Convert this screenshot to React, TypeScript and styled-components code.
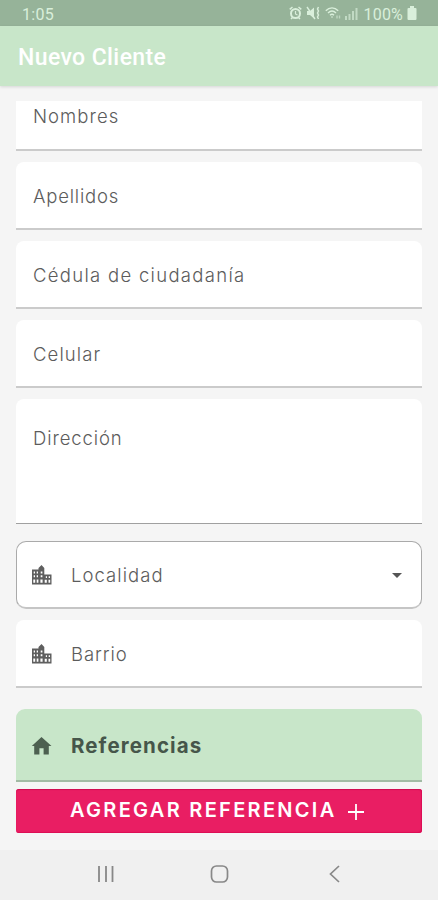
import React from "react";
import styled, { createGlobalStyle } from "styled-components";

const GlobalStyle = createGlobalStyle`
  * { box-sizing: border-box; }
  body { margin: 0; background: #f5f5f5; }
`;

const Screen = styled.div`
  width: 438px;
  height: 900px;
  display: flex;
  flex-direction: column;
  overflow: hidden;
  background: #f5f5f5;
  font-family: Inter, "Open Sans", sans-serif;
  color: #5c5c5c;
`;

const StatusBar = styled.header`
  height: 26px;
  flex: none;
  padding: 2px 21px 0 22px;
  display: flex;
  align-items: center;
  justify-content: space-between;
  background: #96b399;
  color: #d9efdb;
  font: 400 16px Roboto, sans-serif;
`;

const Clock = styled.span`
  letter-spacing: 0.3px;
`;

const StatusIcons = styled.div`
  display: flex;
  align-items: center;
  gap: 4px;
  svg { display: block; position: relative; top: -1px; }
`;

const Percent = styled.span`
  letter-spacing: 0.2px;
  margin-left: 2px;
`;

const AppBar = styled.div`
  height: 60px;
  flex: none;
  padding: 2px 18px 0;
  display: flex;
  align-items: center;
  background: #c8e6c9;
  box-shadow: 0 1px 3px rgba(0, 0, 0, 0.13);
  color: #fff;
  font: 500 23px Roboto, sans-serif;
  letter-spacing: 0.4px;
`;

const Form = styled.main`
  flex: 1;
  padding: 15px 16px 0;
  display: flex;
  flex-direction: column;
`;

const Field = styled.label<{ $height?: number; $clipped?: boolean; $gap?: number; $multiline?: boolean }>`
  height: ${(p) => p.$height ?? 68}px;
  flex: none;
  margin-bottom: ${(p) => p.$gap ?? 11}px;
  padding: ${(p) => (p.$clipped ? "0 17px 18px" : p.$multiline ? "26px 17px 0" : "2px 17px 0")};
  display: flex;
  align-items: ${(p) => (p.$multiline ? "flex-start" : "center")};
  background: #fff;
  border-bottom: ${(p) => (p.$multiline ? "1px solid #a0a0a0" : "2px solid #cbcbcb")};
  border-radius: ${(p) => (p.$clipped ? 0 : "8px 8px 0 0")};
`;

const SelectField = styled.div`
  height: 68px;
  flex: none;
  margin-bottom: 11px;
  padding: 1px 18px 0 14px;
  display: flex;
  align-items: center;
  background: #fff;
  border: 1px solid #aaa;
  border-bottom: 2px solid #c5c5c5;
  border-radius: 10px;
`;

const Label = styled.span<{ $spacing: number }>`
  font-size: 18.5px;
  font-weight: 300;
  line-height: 26px;
  white-space: nowrap;
  letter-spacing: ${(p) => p.$spacing}px;
`;

const Leading = styled.span`
  width: 40px;
  flex: none;
  display: flex;
  svg { display: block; }
`;

const Arrow = styled.svg`
  display: block;
  margin-left: auto;
`;

const IconField = styled(Field)`
  padding: 2px 15px 0;
`;

const SectionHeader = styled.div`
  height: 73px;
  flex: none;
  padding: 2px 15px 0;
  display: flex;
  align-items: center;
  background: #c8e6c9;
  border-bottom: 2px solid #a2bba4;
  border-radius: 9px 9px 0 0;
  color: #46564a;
`;

const SectionTitle = styled.h2`
  margin: 0;
  font-size: 20.5px;
  font-weight: 700;
  letter-spacing: 1.1px;
`;

const AddButton = styled.button`
  height: 44px;
  flex: none;
  margin-top: 7px;
  padding: 0 58px 3px 54px;
  display: flex;
  align-items: center;
  justify-content: space-between;
  border: 0;
  border-radius: 3px;
  background: #e91e63;
  box-shadow: inset 0 1px 1px #cf0b50, inset -1px -1px 1px #dc0d55;
  color: #fff;
  font: 600 20px Inter, sans-serif;
  letter-spacing: 2.3px;
  white-space: nowrap;
  svg { display: block; position: relative; top: 2px; }
`;

const NavBar = styled.nav`
  height: 50px;
  flex: none;
  padding: 0 91px 2px;
  display: flex;
  align-items: center;
  justify-content: space-between;
  background: #f0f0f0;
  svg { display: block; }
`;

const CityIcon = () => (
  <svg width="21" height="22" viewBox="0 0 21 22">
    <path
      fill="#5f5f5f"
      fillRule="evenodd"
      d="M1 5.500H7.500V4L10.500 1L13.300 4V10.500H20.500V20.500H1ZM2.700 7.500V9.500H4V7.500ZM5.700 7.500V9.500H7V7.500ZM2.700 11.200V13.200H4V11.200ZM5.700 11.200V13.200H7V11.200ZM2.300 15.500V18.800H4.200V15.500ZM5.700 15.500V18.800H7.400V15.500ZM9.700 7.500V9.500H11.400V7.500ZM9.700 11.200V13.200H11.400V11.200ZM9.400 15.500V18.800H11.600V15.500ZM14.800 12.200V14H16V12.200ZM17.700 12.200V14H19V12.200ZM13.700 15.700V18.800H15.800V15.700ZM17.500 15.700V18.800H19.200V15.700Z"
    />
  </svg>
);

const HomeIcon = () => (
  <svg width="21" height="20" viewBox="0 0 21 20">
    <path fill="#4d6050" d="M10.5 1 20.5 10H17.8V18.5H12.6V12.3H8.4V18.5H3.2V10H.8Z" />
  </svg>
);

const AlarmIcon = () => (
  <svg width="13" height="14" viewBox="0 0 13 14" fill="none" stroke="currentColor">
    <circle cx="6.5" cy="7.5" r="4.5" strokeWidth="2" />
    <path d="M6.5 5v3l2 1" strokeWidth="1.2" />
    <path d="M.7 3.3 3.5 1M12.3 3.3 9.5 1M2 13l1.5-1.5M11 13l-1.5-1.5" strokeWidth="1.5" />
  </svg>
);

const MuteIcon = () => (
  <svg width="15" height="14" viewBox="0 0 15 14" fill="none" stroke="currentColor">
    <path d="M1 5h3l4-3.5v11L4 9H1Z" fill="currentColor" stroke="none" />
    <path d="m1 1 8 12" strokeWidth="1.4" />
    <path d="m12.5 1-1 2 1 2-1 2 1 2-1 2 1 2" strokeWidth="1.5" />
  </svg>
);

const WifiIcon = () => (
  <svg width="16" height="14" viewBox="0 0 16 14" fill="none" stroke="currentColor" strokeWidth="1.4">
    <path d="M.8 4.8C4.5.9 9.5.9 13.2 4.8M3 7c2.5-2.5 5.5-2.5 8 0M5 9.2c1.4-1.3 2.6-1.3 4 0" />
    <circle cx="7" cy="11" r=".8" fill="currentColor" stroke="none" />
    <path d="M12 9.5v3M14.5 9.5v3" opacity=".6" />
  </svg>
);

const SignalIcon = () => (
  <svg width="13" height="13" viewBox="0 0 13 13" fill="currentColor" opacity=".65">
    <path d="M0 9h2v4H0zM3.5 7h2v6h-2zM7 4h2v9H7zM10.5 1h2v12h-2z" />
  </svg>
);

const BatteryIcon = () => (
  <svg width="10" height="14" viewBox="0 0 10 14" fill="currentColor">
    <path d="M3 0h4v2h1.5q1 0 1 1v10q0 1-1 1h-7q-1 0-1-1V3q0-1 1-1H3Z" />
  </svg>
);

export default function App() {
  return (
    <>
      <GlobalStyle />
      <Screen>
        <StatusBar>
          <Clock>1:05</Clock>
          <StatusIcons>
            <AlarmIcon />
            <MuteIcon />
            <WifiIcon />
            <SignalIcon />
            <Percent>100%</Percent>
            <BatteryIcon />
          </StatusIcons>
        </StatusBar>
        <AppBar>Nuevo Cliente</AppBar>
        <Form>
          <Field $height={50} $clipped><Label $spacing={1.05}>Nombres</Label></Field>
          <Field><Label $spacing={0.8}>Apellidos</Label></Field>
          <Field><Label $spacing={1.3}>Cédula de ciudadanía</Label></Field>
          <Field><Label $spacing={1.1}>Celular</Label></Field>
          <Field $height={125} $gap={17} $multiline><Label $spacing={0.9}>Dirección</Label></Field>
          <SelectField>
            <Leading><CityIcon /></Leading>
            <Label $spacing={1.05}>Localidad</Label>
            <Arrow width="12" height="7" viewBox="0 0 12 7">
              <path d="M1 1h10L6 6Z" fill="#555" />
            </Arrow>
          </SelectField>
          <IconField $gap={21}>
            <Leading><CityIcon /></Leading>
            <Label $spacing={0.9}>Barrio</Label>
          </IconField>
          <SectionHeader>
            <Leading><HomeIcon /></Leading>
            <SectionTitle>Referencias</SectionTitle>
          </SectionHeader>
          <AddButton type="button">
            <span>AGREGAR REFERENCIA</span>
            <svg width="16" height="16" viewBox="0 0 16 16">
              <path d="M8 0v16M0 8h16" stroke="#fff" strokeWidth="1.8" />
            </svg>
          </AddButton>
        </Form>
        <NavBar>
          <svg width="30" height="20" viewBox="0 0 30 20">
            <path d="M8 2v16M15 2v16M21.5 2v16" stroke="#888" strokeWidth="1.8" />
          </svg>
          <svg width="30" height="20" viewBox="0 0 30 20">
            <rect x="7.5" y="2" width="16" height="16" rx="5" fill="none" stroke="#888" strokeWidth="1.7" />
          </svg>
          <svg width="30" height="20" viewBox="0 0 30 20">
            <path d="m22 2-8.500 8 8.500 8" fill="none" stroke="#888" strokeWidth="1.700" />
          </svg>
        </NavBar>
      </Screen>
    </>
  );
}
